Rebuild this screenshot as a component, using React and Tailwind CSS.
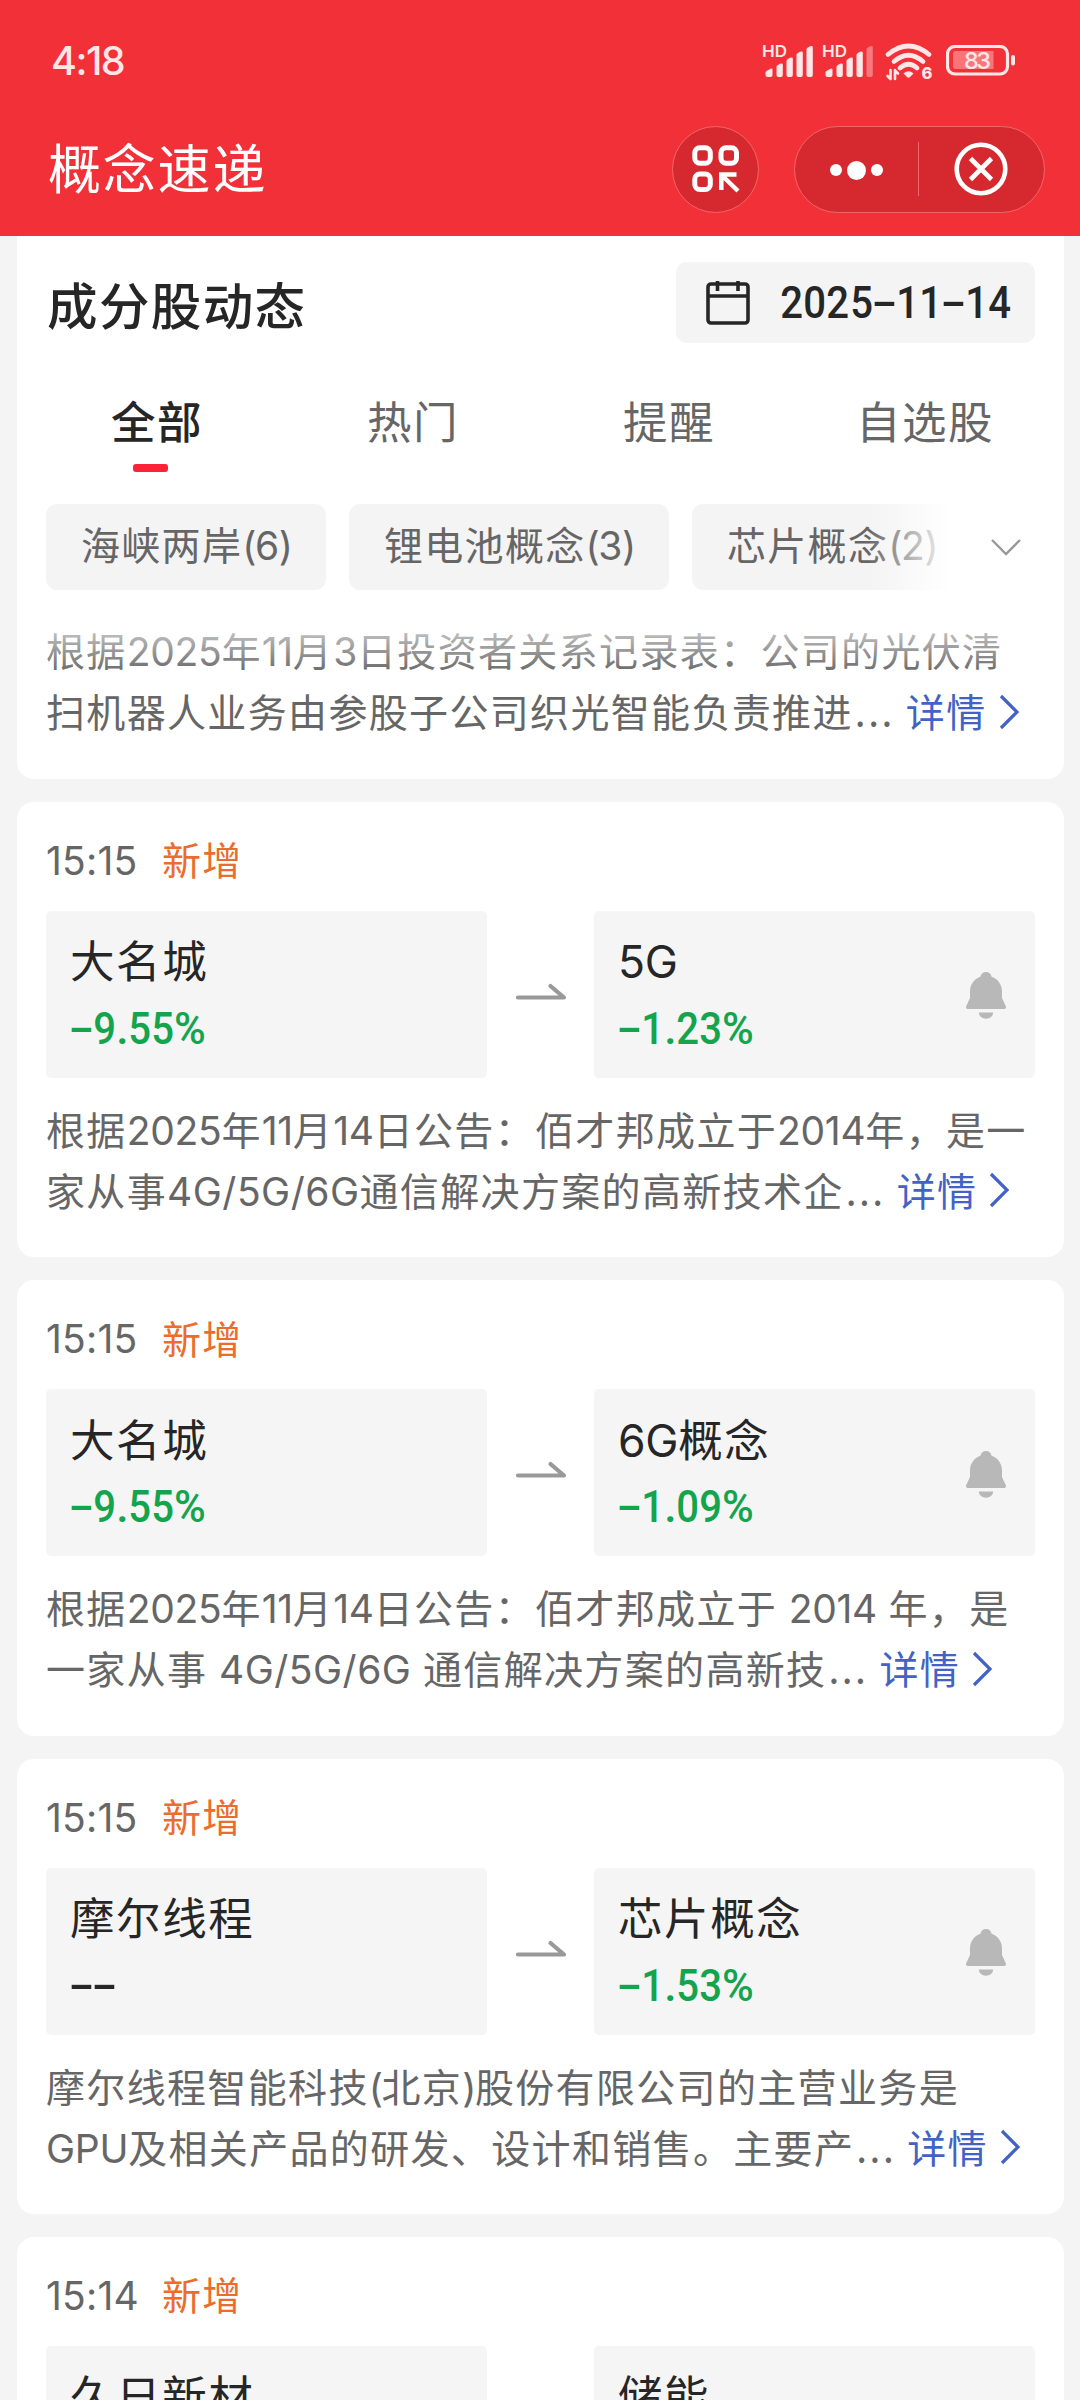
import React from "react";

const CJK = "font-['Noto_Sans_CJK_SC',sans-serif]";

/* Mixed text: Latin runs use Inter, everything else the CJK face. */
function Mixed({ children }) {
  return children.split(/([0-9A-Za-z/:.]+|[()])/).map((part, i) => {
    if (i % 2 === 0) return <React.Fragment key={i}>{part}</React.Fragment>;
    const tracking = part.includes("/")
      ? "tracking-[0.5px]"
      : /[()]/.test(part)
      ? "tracking-[-1.5px]"
      : "tracking-[-0.3px]";
    return (
      <span key={i} className={`font-['Inter',sans-serif] ${tracking}`}>
        {part}
      </span>
    );
  });
}

/* Condensed tabular figures with a wide dash. */
function Figures({ children, className = "" }) {
  return (
    <span className={`inline-flex font-['Roboto',sans-serif] font-medium ${className}`}>
      {children.split("").map((c, i) => (
        <span
          key={i}
          className={
            c === "-"
              ? "inline-block w-[23px] origin-center translate-y-[-1px] scale-x-[1.7] text-center"
              : c === "."
              ? "inline-block w-[11.5px] text-center"
              : c === "%"
              ? "inline-block w-[32px] origin-left scale-x-[0.97]"
              : "inline-flex w-[23.2px] justify-center"
          }
        >
          {c === "-" || c === "." || c === "%" ? c : <span className="scale-x-[0.9]">{c}</span>}
        </span>
      ))}
    </span>
  );
}

function Signal({ weak }) {
  return (
    <svg width="52" height="36" viewBox="0 0 52 36" fill="#ffe6e7" overflow="visible">
      <text x="-1" y="13.500" fontSize="16.500" fontWeight="600" fontFamily="Inter, sans-serif" textLength="25" lengthAdjust="spacingAndGlyphs">HD</text>
      <path d="M2.500 32v-2.500q0-1 1-1.600l3.500-2q2.500-1 2.500 1V32q0 2-2 2h-3q-2 0-2-2z" />
      <path d="M13.500 32V24q0-1.200 1-1.800l2.500-1.400q2.800-1.200 2.800 1V32q0 2-2 2h-2.300q-2 0-2-2z" />
      <path d="M23.500 32V18q0-1.200 1-1.800l2.500-1.400q2.800-1.200 2.800 1V32q0 2-2 2h-2.300q-2 0-2-2z" />
      <path d="M33.500 32V12q0-1.200 1-1.800l2.500-1.400q2.800-1.200 2.800 1V32q0 2-2 2h-2.300q-2 0-2-2z" />
      <path opacity={weak ? 0.4 : 1} d="M43.500 32V6.500q0-1.200 1-1.800l2.500-1.400q2.800-1.200 2.800 1V32q0 2-2 2h-2.300q-2 0-2-2z" />
    </svg>
  );
}

function Wifi() {
  return (
    <svg width="50" height="38" viewBox="0 0 50 38" fill="none" stroke="#ffe6e7" strokeWidth="4.8" strokeLinecap="round" overflow="visible">
      <path d="M3 11.500Q23.500-5.500 44 11.500" />
      <path d="M9 18.500Q23.500 6 38 18.500" />
      <path d="M15 25Q23.500 17.500 32 25" />
      <path d="M18.500 30.500Q23.500 26 28.500 30.500L25 34Q23.500 35.500 22 34Z" fill="#ffe6e7" stroke="none" />
      <path d="M5.500 27v9M5.500 36l-3-3M10 36v-9M10 27.500l3 3" strokeWidth="2.600" />
      <text x="36.500" y="36" fontSize="16.500" fontWeight="800" stroke="none" fill="#ffe6e7" fontFamily="Inter, sans-serif">6</text>
    </svg>
  );
}

function Battery() {
  return (
    <svg width="70" height="32" viewBox="0 0 70 32">
      <rect x="1.500" y="1.500" width="60" height="27.500" rx="7.500" fill="none" stroke="#ffe6e7" strokeWidth="3.200" />
      <path d="M10 6h37.500v18H10a3 3 0 0 1-3-3V9a3 3 0 0 1 3-3z" fill="#f9757a" />
      <rect x="65" y="10" width="4" height="10.500" rx="2" fill="#ffe6e7" />
      <text x="31.500" y="23.500" fontSize="23.500" fontWeight="500" textAnchor="middle" fill="#ffe6e7" fontFamily="Inter, sans-serif" textLength="27">83</text>
    </svg>
  );
}

function Header() {
  return (
    <header className="h-[236px] bg-[#f23038]">
      <div className="flex h-[122px] items-center justify-between pl-[51px] pr-[64px] pt-[2px]">
        <span className="font-['Inter',sans-serif] text-[39.500px] font-medium leading-none tracking-[-1.500px] text-[#ffe6e7]">4:18</span>
        <div className="flex items-start">
          <Signal />
          <div className="ml-[8px]"><Signal weak /></div>
          <div className="ml-[10px]"><Wifi /></div>
          <div className="ml-[11px] pt-[2px]"><Battery /></div>
        </div>
      </div>
      <div className="-mt-[2px] flex h-[98px] items-center pl-[48px] pr-[35px]">
        <h1 className="flex-1 pb-[5px] text-[53px] leading-none tracking-[1.800px] text-white">概念速递</h1>
        <div className="flex size-[87px] items-center justify-center rounded-full border border-[#f5646a] bg-[#d6292f]">
          <svg width="48" height="48" viewBox="0 0 48 48" fill="none" stroke="white" strokeWidth="5">
            <rect x="2.800" y="2.800" width="15.500" height="15.500" rx="5" />
            <rect x="29" y="2.800" width="15.500" height="15.500" rx="5" />
            <rect x="2.800" y="29" width="15.500" height="15.500" rx="5" />
            <path d="M29.300 45V29.500H44.500M30 30.500L46 46" strokeWidth="4.500" />
          </svg>
        </div>
        <div className="ml-[35px] flex h-[87px] w-[251px] items-center rounded-full border border-[#f5646a] bg-[#d6292f]">
          <div className="flex h-[54px] w-[124px] items-center justify-center gap-[5px] border-r border-[#f5646a] pt-[2px]">
            <i className="size-[12px] rounded-full bg-white" />
            <i className="size-[19px] rounded-full bg-white" />
            <i className="size-[12px] rounded-full bg-white" />
          </div>
          <svg className="ml-[35px]" width="54" height="54" viewBox="0 0 54 54" fill="none" stroke="white" strokeWidth="4.600">
            <circle cx="27" cy="27" r="24.300" />
            <path d="M16.500 16.500l21 21M37.500 16.500l-21 21" />
          </svg>
        </div>
      </div>
    </header>
  );
}

function Chip({ children, className }) {
  return (
    <div className={`flex h-[86px] shrink-0 items-center rounded-[11px] bg-[#f4f4f4] pb-[5px] pl-[35px] ${className}`}>
      <span className="whitespace-nowrap text-[39px] leading-none tracking-[1.3px] text-[#666]">
        <Mixed>{children}</Mixed>
      </span>
    </div>
  );
}

function Desc({ lines }) {
  return (
    <div className="whitespace-nowrap text-[39px] leading-[60px] tracking-[1.34px] text-[#666] [word-spacing:1.5px]">
      <div className="h-[61px]"><Mixed>{lines[0]}</Mixed></div>
      <div className="flex h-[60px] items-center">
        <span className="h-[60px]"><Mixed>{lines[1]}</Mixed></span>
        <span className="w-[53px] pl-[2px] tracking-[2.500px]">...</span>
        <span className="text-[#4263c5]">详情</span>
        <svg className="ml-[12px] mt-[3px]" width="22" height="36" viewBox="0 0 22 36" fill="none" stroke="#4263c5" strokeWidth="3.200">
          <path d="M2 2L18 18 2 34" />
        </svg>
      </div>
    </div>
  );
}

function Bell() {
  return (
    <svg className="mt-px" width="40" height="47" viewBox="0 0 40 47" fill="#b8b8b8">
      <path d="M20 0c3 0 5 1.800 5.600 4.700C32 7 36 12.500 36 19.500V26l3.700 8c.8 1.800-.2 3-1.900 3H2.200C.5 37-.5 35.800.3 34L4 26v-6.500C4 12.500 8 7 14.400 4.700 15 1.800 17 0 20 0z" />
      <path d="M12.800 40.500h14.400a7.200 6.200 0 0 1-14.400 0z" />
    </svg>
  );
}

function Quote({ name, change, children }) {
  return (
    <div className="flex h-[167px] w-[441px] items-center justify-between rounded-[5px] bg-[#f5f5f5] pl-[24px] pr-[29px] pt-[2px]">
      <div>
        <div className="h-[66px] whitespace-nowrap text-[44.500px] leading-[62px] tracking-[1.580px] text-[#262626]">
          <Mixed>{name}</Mixed>
        </div>
        <div className="flex h-[68px] items-center pt-[2px]">
          <Figures className={change === "--" ? "text-[44.5px] leading-none text-[#262626]" : "text-[44.5px] leading-none text-[#14a44d]"}>{change}</Figures>
        </div>
      </div>
      {children}
    </div>
  );
}

function Card({ time, from, fromChange, to, toChange, lines }) {
  return (
    <section className="mt-[23.040px] h-[455.400px] shrink-0 rounded-[17px] bg-white px-[29px] pt-[28px]">
      <div className="flex h-[61px] items-center text-[39px] leading-[61px]">
        <span className="w-[116px] font-['Inter',sans-serif] tracking-[0.200px] text-[#666]">{time}</span>
        <span className="pb-[3px] tracking-[1.320px] text-[#eb6c2c]">新增</span>
      </div>
      <div className="mt-[20px] flex items-center justify-between">
        <Quote name={from} change={fromChange} />
        <svg className="-mt-[5px]" width="52" height="20" viewBox="0 0 52 20" fill="none" stroke="#999" strokeWidth="4.200" strokeLinecap="round" strokeLinejoin="round">
          <path d="M3 15.500H49L35.500 4" />
        </svg>
        <Quote name={to} change={toChange}><Bell /></Quote>
      </div>
      <div className="mt-[20px]"><Desc lines={lines} /></div>
    </section>
  );
}

const cards = [
  { time: "15:15", from: "大名城", fromChange: "-9.55%", to: "5G", toChange: "-1.23%",
    lines: ["根据2025年11月14日公告：佰才邦成立于2014年，是一", "家从事4G/5G/6G通信解决方案的高新技术企"] },
  { time: "15:15", from: "大名城", fromChange: "-9.55%", to: "6G概念", toChange: "-1.09%",
    lines: ["根据2025年11月14日公告：佰才邦成立于 2014 年，是", "一家从事 4G/5G/6G 通信解决方案的高新技"] },
  { time: "15:15", from: "摩尔线程", fromChange: "--", to: "芯片概念", toChange: "-1.53%",
    lines: ["摩尔线程智能科技(北京)股份有限公司的主营业务是", "GPU及相关产品的研发、设计和销售。主要产"] },
];

export default function App() {
  return (
    <div className={`h-[2400px] w-[1080px] overflow-hidden bg-[#f4f4f4] ${CJK}`}>
      <Header />
      <main className="flex h-[2164px] flex-col overflow-hidden pl-[17px] pr-[16px]">
        <section className="h-[542.700px] shrink-0 rounded-b-[17px] bg-white px-[29px] pt-[26px]">
          <div className="flex h-[81px] items-center justify-between">
            <h2 className="pl-px pt-[2px] text-[50.500px] font-medium leading-none tracking-[1.400px] text-[#262626]">成分股动态</h2>
            <div className="flex h-[81px] w-[359px] items-center rounded-[11px] bg-[#f4f4f4] pl-[30px]">
              <svg width="44" height="46" viewBox="0 0 44 46" fill="none" stroke="#262626" strokeWidth="3.600">
                <rect x="2" y="4" width="40" height="39" rx="3" />
                <path d="M2 16H42M11.500 1v10M32 1v10" />
              </svg>
              <Figures className="ml-[30px] pt-px text-[44.500px] leading-none text-[#262626]">2025-11-14</Figures>
            </div>
          </div>
          <nav className="-ml-[17px] mt-[44px] grid w-[1024px] grid-cols-4 text-center text-[44.500px] leading-[66px] tracking-[1.580px] text-[#666]">
            <div className="font-medium text-[#262626]">
              全部
              <div className="ml-[104px] mt-[11px] h-[8px] w-[35px] rounded-[3px] bg-[#fa2337]" />
            </div>
            <div>热门</div>
            <div>提醒</div>
            <div>自选股</div>
          </nav>
          <div className="mt-[32px] flex items-center">
            <div className="relative flex w-[906px] gap-[23px] overflow-hidden">
              <Chip className="w-[280px]">海峡两岸(6)</Chip>
              <Chip className="w-[320px]">锂电池概念(3)</Chip>
              <Chip className="w-[280px]">芯片概念(2)</Chip>
              <div className="absolute right-0 top-0 h-full w-[84px] bg-gradient-to-r from-white/0 to-white" />
            </div>
            <svg className="ml-[38px]" width="32" height="20" viewBox="0 0 32 20" fill="none" stroke="#999" strokeWidth="2.400">
              <path d="M2 3L16 17 30 3" />
            </svg>
          </div>
          <div className="relative pt-[29px]">
            <Desc lines={["根据2025年11月3日投资者关系记录表：公司的光伏清", "扫机器人业务由参股子公司织光智能负责推进"]} />
            <div className="absolute inset-x-0 top-0 h-[84px] bg-gradient-to-b from-white from-15% to-white/0" />
          </div>
        </section>
        {cards.map((c, i) => <Card key={i} {...c} />)}
        <section className="mt-[23.040px] h-[455.400px] shrink-0 rounded-t-[17px] bg-white px-[29px] pt-[28px]">
          <div className="flex h-[61px] items-center text-[39px] leading-[61px]">
            <span className="w-[116px] font-['Inter',sans-serif] tracking-[0.200px] text-[#666]">15:14</span>
            <span className="pb-[3px] tracking-[1.320px] text-[#eb6c2c]">新增</span>
          </div>
          <div className="mt-[20px] flex justify-between text-[44.500px] leading-[62px] tracking-[1.580px] text-[#262626]">
            <div className="h-[167px] w-[441px] rounded-[5px] bg-[#f5f5f5] pl-[24px] pt-[17.500px]">久日新材</div>
            <div className="h-[167px] w-[441px] rounded-[5px] bg-[#f5f5f5] pl-[24px] pt-[17.500px]">储能</div>
          </div>
        </section>
      </main>
    </div>
  );
}
